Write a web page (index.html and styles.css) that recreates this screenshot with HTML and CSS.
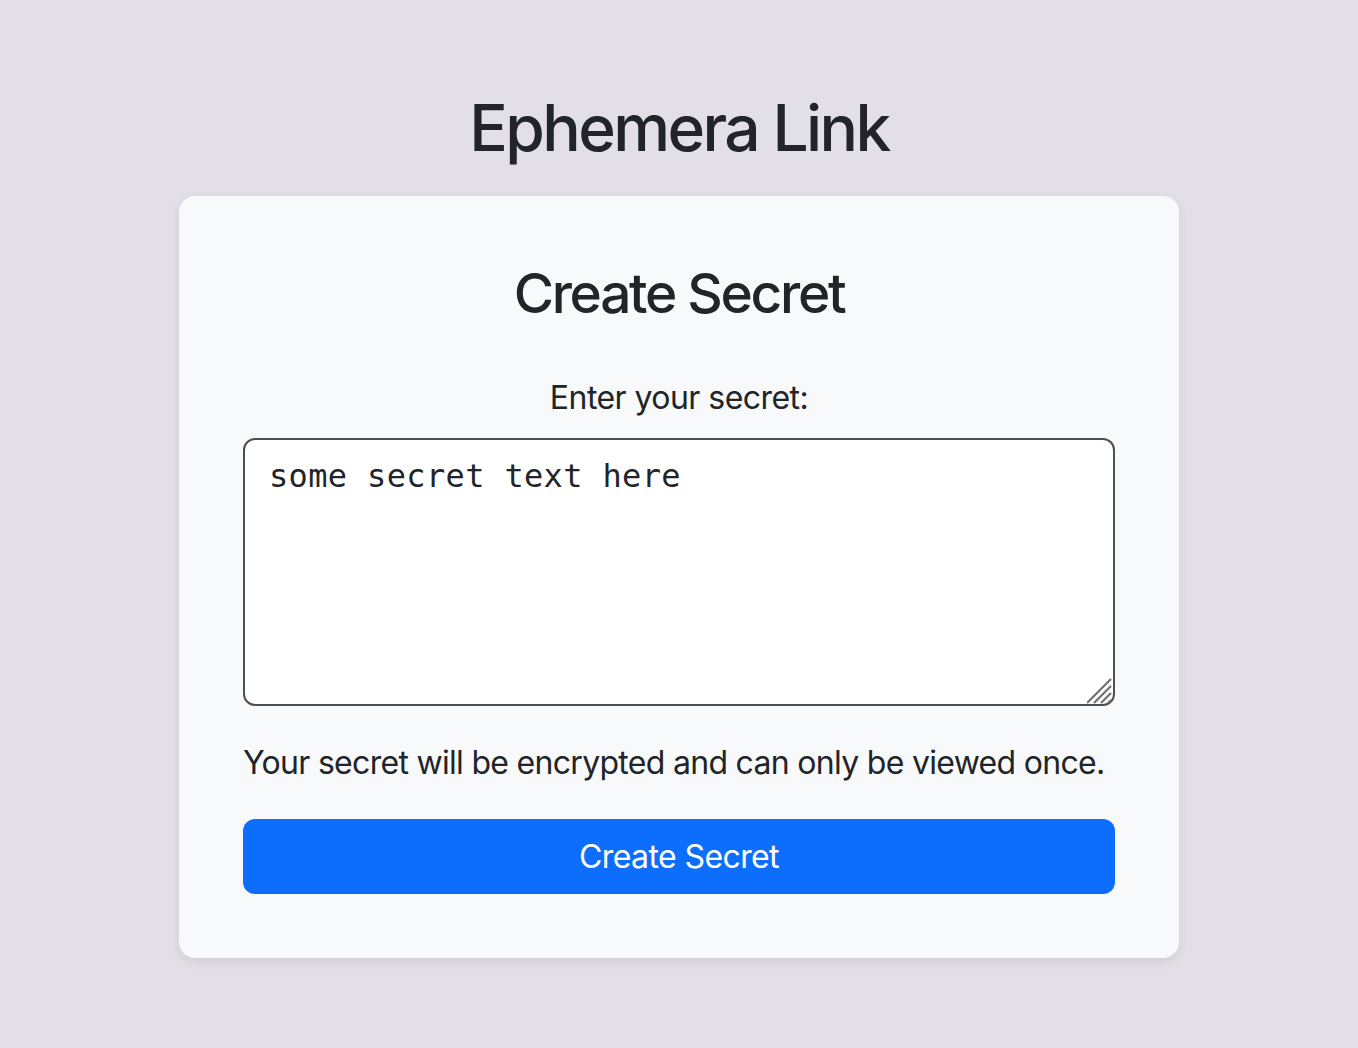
FILE: index.html
```html
<!DOCTYPE html>
<html lang="en">
<head>
<meta charset="utf-8">
<title>Ephemera Link</title>
<link rel="stylesheet" href="styles.css">
</head>
<body>
<main class="page">
  <h1 class="app-title">Ephemera Link</h1>
  <section class="card">
    <h2 class="card-title">Create Secret</h2>
    <form class="secret-form">
      <label class="form-label" for="secret">Enter your secret:</label>
      <div class="input-wrap">
        <textarea id="secret" class="secret-input">some secret text here</textarea>
        <svg class="resize-handle" width="26" height="26" viewBox="0 0 26 26" aria-hidden="true">
          <g stroke="#6f6f6f" stroke-width="2.2" stroke-linecap="butt">
            <line x1="0" y1="25" x2="24" y2="1"/>
            <line x1="7" y1="25" x2="24" y2="8"/>
            <line x1="14" y1="25" x2="24" y2="15"/>
            <line x1="21" y1="25" x2="24" y2="22"/>
          </g>
        </svg>
      </div>
      <p class="hint">Your secret will be encrypted and can only be viewed once.</p>
      <button type="button" class="btn-primary">Create Secret</button>
    </form>
  </section>
</main>
</body>
</html>
```
FILE: styles.css
```css
* { box-sizing: border-box; }
html, body { margin: 0; padding: 0; }
body {
  background: #e2e0e6;
  color: #212529;
  font-family: Inter, "Noto Sans", sans-serif;
  font-size: 32px;
  line-height: 1.5;
}
.page {
  min-height: 100vh;
  display: flex;
  flex-direction: column;
  align-items: center;
  justify-content: center;
}
.app-title {
  margin: 0 0 30px;
  font-size: 64px;
  font-weight: 550;
  line-height: 1.2;
  letter-spacing: -2.6px;
}
.card {
  width: 1000px;
  background: #f8f9fa;
  border-radius: 16px;
  padding: 64px;
  box-shadow: 0 4px 12px rgba(0, 0, 0, 0.08);
}
.card-title {
  margin: 0 0 48px;
  text-align: center;
  font-size: 55px;
  font-weight: 550;
  line-height: 1.2;
  letter-spacing: -2.3px;
}
.secret-form {
  display: flex;
  flex-direction: column;
}
.form-label {
  display: block;
  text-align: center;
  margin-bottom: 16px;
  letter-spacing: -0.55px;
}
.input-wrap {
  position: relative;
}
.secret-input {
  display: block;
  width: 100%;
  height: 268px;
  padding: 12px 24px;
  border: 2px solid #495057;
  border-radius: 12px;
  background: #fff;
  color: #212529;
  font-family: "DejaVu Sans Mono", "Liberation Mono", monospace;
  font-size: 32px;
  line-height: 1.5;
  letter-spacing: 0.35px;
  resize: none;
}
.resize-handle {
  position: absolute;
  right: 2px;
  bottom: 2px;
  pointer-events: none;
}
.hint {
  margin: 33px 0 32px;
  letter-spacing: -0.7px;
  white-space: nowrap;
}
.btn-primary {
  display: block;
  width: 100%;
  height: 75px;
  border: 0;
  border-radius: 12px;
  background: #0d6efd;
  color: #fff;
  font-family: inherit;
  font-size: 32px;
  line-height: 1.5;
  letter-spacing: -0.6px;
  cursor: pointer;
}
```
